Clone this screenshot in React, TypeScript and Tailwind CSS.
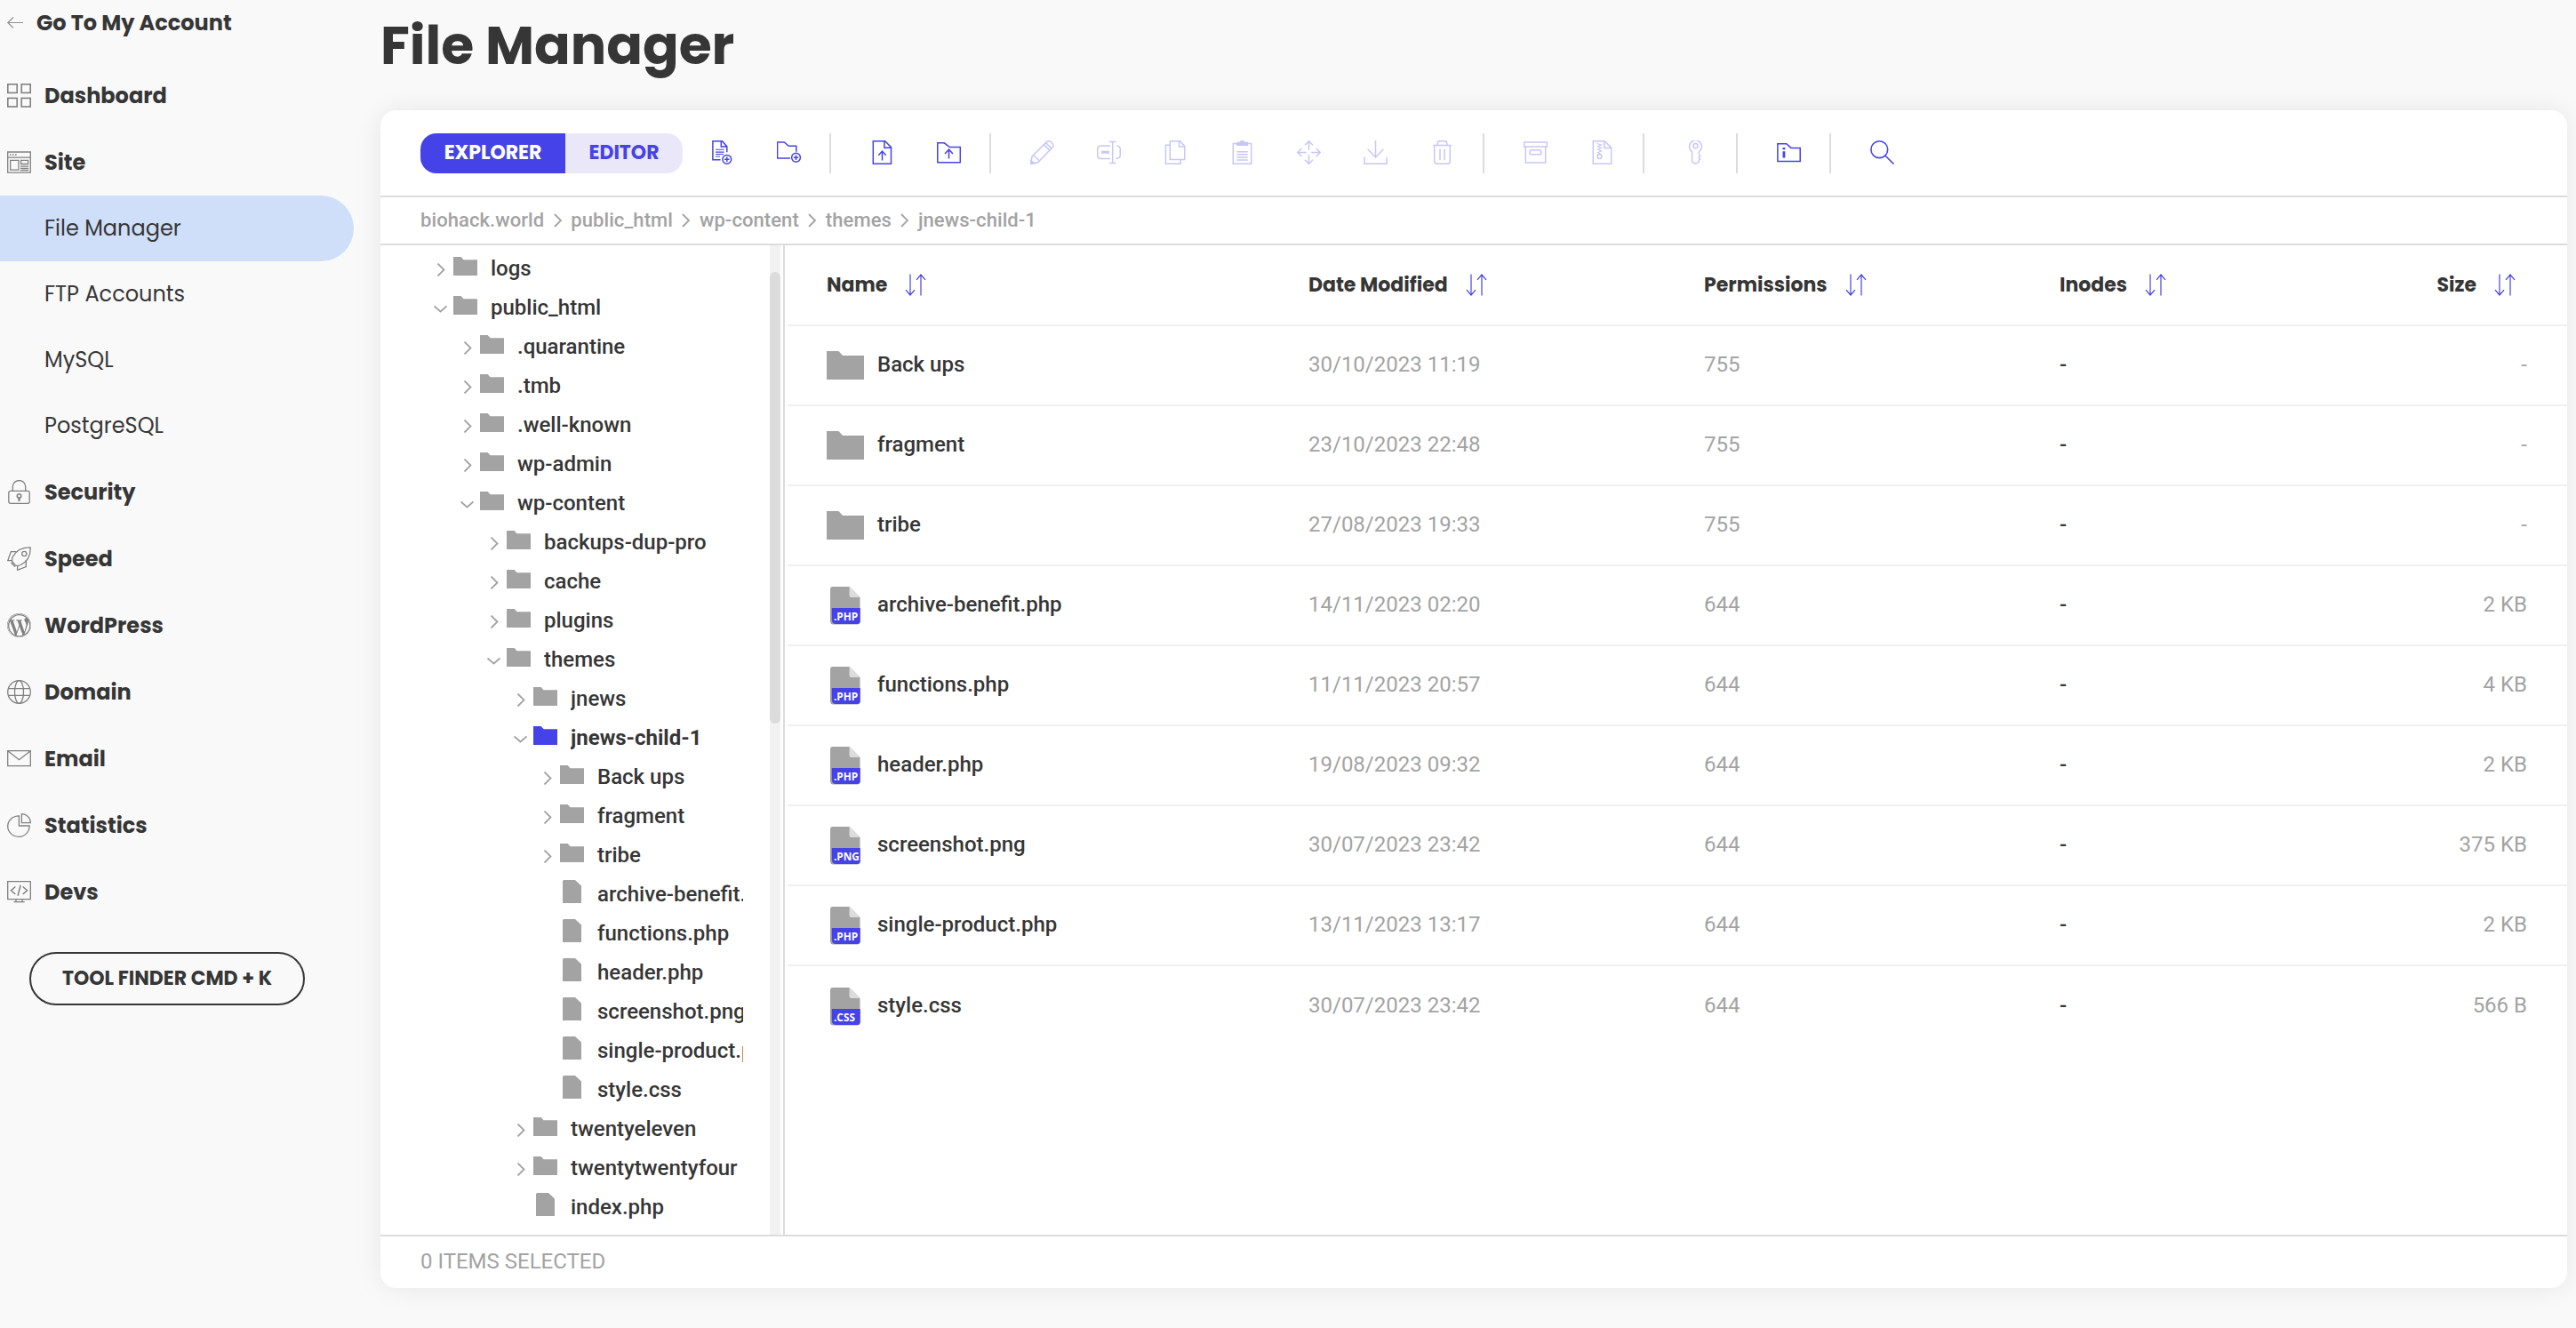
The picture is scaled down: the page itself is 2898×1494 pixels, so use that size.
import React from 'react';
import { clsx } from 'clsx';
import { FaWordpress } from 'react-icons/fa';

type Node = {
    name: string;
    depth: number;
    kind: 'closed' | 'open' | 'file';
    active?: boolean;
};

type FileRow = {
    name: string;
    date: string;
    permissions: string;
    size: string;
    ext?: string;
};

const tree: Node[] = [
    { name: 'logs', depth: 0, kind: 'closed' },
    { name: 'public_html', depth: 0, kind: 'open' },
    { name: '.quarantine', depth: 1, kind: 'closed' },
    { name: '.tmb', depth: 1, kind: 'closed' },
    { name: '.well-known', depth: 1, kind: 'closed' },
    { name: 'wp-admin', depth: 1, kind: 'closed' },
    { name: 'wp-content', depth: 1, kind: 'open' },
    { name: 'backups-dup-pro', depth: 2, kind: 'closed' },
    { name: 'cache', depth: 2, kind: 'closed' },
    { name: 'plugins', depth: 2, kind: 'closed' },
    { name: 'themes', depth: 2, kind: 'open' },
    { name: 'jnews', depth: 3, kind: 'closed' },
    { name: 'jnews-child-1', depth: 3, kind: 'open', active: true },
    { name: 'Back ups', depth: 4, kind: 'closed' },
    { name: 'fragment', depth: 4, kind: 'closed' },
    { name: 'tribe', depth: 4, kind: 'closed' },
    { name: 'archive-benefit.php', depth: 4, kind: 'file' },
    { name: 'functions.php', depth: 4, kind: 'file' },
    { name: 'header.php', depth: 4, kind: 'file' },
    { name: 'screenshot.png', depth: 4, kind: 'file' },
    { name: 'single-product.php', depth: 4, kind: 'file' },
    { name: 'style.css', depth: 4, kind: 'file' },
    { name: 'twentyeleven', depth: 3, kind: 'closed' },
    { name: 'twentytwentyfour', depth: 3, kind: 'closed' },
    { name: 'index.php', depth: 3, kind: 'file' },
];

const files: FileRow[] = [
    { name: 'Back ups', date: '30/10/2023 11:19', permissions: '755', size: '-' },
    { name: 'fragment', date: '23/10/2023 22:48', permissions: '755', size: '-' },
    { name: 'tribe', date: '27/08/2023 19:33', permissions: '755', size: '-' },
    { name: 'archive-benefit.php', date: '14/11/2023 02:20', permissions: '644', size: '2 KB', ext: '.PHP' },
    { name: 'functions.php', date: '11/11/2023 20:57', permissions: '644', size: '4 KB', ext: '.PHP' },
    { name: 'header.php', date: '19/08/2023 09:32', permissions: '644', size: '2 KB', ext: '.PHP' },
    { name: 'screenshot.png', date: '30/07/2023 23:42', permissions: '644', size: '375 KB', ext: '.PNG' },
    { name: 'single-product.php', date: '13/11/2023 13:17', permissions: '644', size: '2 KB', ext: '.PHP' },
    { name: 'style.css', date: '30/07/2023 23:42', permissions: '644', size: '566 B', ext: '.CSS' },
];

const crumbs = ['biohack.world', 'public_html', 'wp-content', 'themes', 'jnews-child-1'];

const columns = 'grid grid-cols-[542px_445px_400px_1fr_auto] pl-11 pr-[45px]';

/* ---------- icons ---------- */

const SideSvg = ({ children }: { children: React.ReactNode }) => (
    <svg width="27" height="27" viewBox="0 0 27 27" fill="none" stroke="#808080" strokeWidth="1.3">
        {children}
    </svg>
);

const sideIcons: Record<string, React.ReactNode> = {
    Dashboard: (
        <SideSvg>
            <g strokeWidth="1.6">
                <rect x=".8" y=".8" width="10.4" height="9.6" />
                <rect x="16.2" y=".8" width="10" height="9.6" />
                <rect x=".8" y="16.4" width="10.4" height="9.6" />
                <rect x="16.2" y="16.4" width="10" height="9.6" />
            </g>
        </SideSvg>
    ),
    Site: (
        <SideSvg>
            <path d="M.7 2h25.6v23.2H.7zM.7 8.2h25.6M3.7 11.3H13v10.9H3.7zM15.6 11.3h8v4.2h-8zM15 18.2h9.2M15 20.5h9.2M15 22.7h9.2" />
            <path d="M3 5h1.6M6 5h1.6M9 5h1.6" strokeWidth="1.5" />
        </SideSvg>
    ),
    Security: (
        <SideSvg>
            <rect x="1.8" y="12.3" width="23.4" height="14" rx="2" />
            <path d="M6.3 12.3V7.5a7.2 7 0 0 1 14.4 0v4.8" />
            <circle cx="13.5" cy="18" r="2.2" strokeWidth="1.6" />
            <path d="M13.5 20v3.8" strokeWidth="2.4" />
        </SideSvg>
    ),
    Speed: (
        <SideSvg>
            <path d="M26.2.8C17.5.5 10 4.2 6.3 11.5c-.9 2-1.100 4-.2 5.800L9.300 21c1.800.8 4 .3 5.900-.5C22.500 17 26.500 9.500 26.200.8z" />
            <circle cx="19.3" cy="8" r="2.6" />
            <path d="M10.5 5.700H4.300L.8 15.600h4.500M5.500 17.500l-.5 1.200 3.400 3.400 1.200-.5M21.300 15.200v7.300l-9.700 3.800v-4.500" />
        </SideSvg>
    ),
    // light mark on a grey disc, so the W itself comes out grey
    WordPress: (
        <span className="flex size-[27px] items-center justify-center overflow-hidden rounded-full bg-[#808080]">
            <FaWordpress className="size-[27.5px] shrink-0 text-[#f9f9f9]" />
        </span>
    ),
    Domain: (
        <SideSvg>
            <circle cx="13.5" cy="13.5" r="12.8" />
            <ellipse cx="13.5" cy="13.5" rx="5" ry="12.8" />
            <path d="M1.3 9.7h24.4M1.3 17.3h24.4" />
        </SideSvg>
    ),
    Email: (
        <SideSvg>
            <path d="M.7 4.7h25.6v17H.7zM.7 4.7l12.800 10 12.800-10" />
        </SideSvg>
    ),
    Statistics: (
        <SideSvg>
            <path d="M13.4 2.8C6.3 2.8.7 8 .7 14.600c0 6.500 5.600 11.700 12.300 11.700 6.800 0 12-5 12.200-12.300H13.400z" />
            <path d="M16.4.7v10h9.900c0-5.800-4.200-9.800-9.900-10z" />
        </SideSvg>
    ),
    Devs: (
        <SideSvg>
            <path d="M.7 1.6h25.6v20H.7zM10 21.6v2.600M17 21.6v2.600M7.5 24.6h12.200" />
            <path d="M9.3 7.5L4.5 11.800l4.800 4.200M17.7 7.5l4.800 4.300-4.800 4.200M15.2 5.800l-3.200 12" strokeWidth="1.5" />
        </SideSvg>
    ),
};

const toolIcons: Record<string, React.ReactNode> = {
    newFile: (
        <>
            <path d="M11.5 21.8H2.9V.7h10.600l5.300 6.200v6.300M12.300.9v6.200h6.500" />
            <path d="M6 10.2h9.600M6 13.100h9.600M6 15.500h9M6 18h5" strokeWidth="1.1" />
            <circle cx="18.8" cy="21.3" r="4.900" />
            <path d="M18.8 18.600V24M16.100 21.300h5.400" />
        </>
    ),
    newFolder: (
        <>
            <path d="M15 20H.6V2h7.700l5 4.300h8.500v6.500" />
            <circle cx="21.5" cy="19.2" r="4.900" />
            <path d="M21.500 16.500v5.400M18.800 19.200h5.400" />
        </>
    ),
    uploadFile: <path d="M3.3.7h13.300l6.900 6.900v18.700H3.300zM15.900.9v7.400h7.400M13.500 22.500v-10M9.300 16.700l4.200-4.600 4.200 4.600" />,
    uploadFolder: <path d="M.8 2.8h7.500l6 4.700h12v17.200H.8zM13.500 20.500v-9.800M9 15l4.500-4.800L18 15" />,
    edit: (
        <>
            <path d="M2 18L18.500 1.600c1.600-1.400 3.900-1 5.600.7 1.800 1.700 2.200 4.200.7 5.800L9 24.500l-8.200 1.800zM15.500 4.800l6.400 6.300M17.600 2.700l6.400 6.200M4 17l6.500 6" />
            <path d="M1 22.800l3.600 3-3.900.5z" fill="currentColor" />
        </>
    ),
    rename: (
        <>
            <path d="M15 6H5Q.7 6 .7 10v6.500q0 4 4.300 4h10M22.500 6q3.800.5 3.800 4v6.500q0 3.500-4.800 4M14 1.600h7.500M14 25.400h7.500M17.700 1.600v23.800" />
            <path d="M5 13.300h9" strokeWidth="3" />
        </>
    ),
    copy: <path d="M7.300.7h11.200l5.300 5.900v15H7.300zM17.500.9v6h6.200M7.300 5.300H2.400v21h16.900v-4.700" />,
    paste: (
        <>
            <path d="M3.300 3.600h20.400v22.700H3.300zM7.300 12.700h12.400M7.300 15.800h12.400M7.300 18.900h12.400M7.300 22h12.400" />
            <path d="M8 2.500h3q2.500-4 5 0h3.500v2.800h-12z" fill="currentColor" />
        </>
    ),
    move: <path d="M13.5 10.800V1M9 5.300L13.500.8 18 5.300M13.500 16.200V26M9 21.700l4.500 4.500 4.500-4.500M10.800 13.500H1M5.300 9L.8 13.500 5.300 18M16.200 13.500H26M21.700 9l4.500 4.500-4.500 4.500" />,
    download: <path d="M13.500.3v18.500M4.600 9.800l8.900 9.200 8.900-9.200M1 18.500v7.800h25v-7.800" />,
    trash: <path d="M3.200 5.400h20.600M8.200 5V3.500Q8.200.7 11 .7h5q2.800 0 2.800 2.800V5M4.700 5.400v17.900q0 3 3 3h11.600q3 0 3-3V5.400M11 9.500v12.800M16 9.500v12.800" />,
    archive: (
        <>
            <path d="M.7 2h25.600v5H.7zM2.300 7h22.400v18H2.300z" />
            <rect x="7" y="10.8" width="13" height="5" rx="2.4" />
        </>
    ),
    zip: (
        <>
            <path d="M3.300.7h13l7.400 7.700v17.900H3.300zM15.800.9v7.600h7.700" />
            <path d="M7.500 3.500l5 1.500-4 1.500 4 2-4 1.500 4 2-4 1.500 3 1.500" strokeWidth="1.1" />
            <circle cx="10.5" cy="18" r="2.4" />
        </>
    ),
    key: (
        <>
            <path d="M9.600 12.600A7 7 0 1 1 17.400 12.600v3.200l1.300 1.500-1.500 2 1.500 1.700-1.500 1.500v1.600l-3.700 2.200-3.900-2.500z" />
            <circle cx="13.500" cy="6.100" r="2.600" />
        </>
    ),
    info: (
        <>
            <path d="M.9 3.700h9.800l5.200 4.700h10.300v15H.9z" />
            <path d="M7.900 12.300v7.200M7.900 8v2.200" strokeWidth="2.800" />
        </>
    ),
    search: <path d="M10.300.8a9.400 9.400 0 1 0 0 18.800 9.400 9.400 0 1 0 0-18.800zM16.800 17l9.700 9.600" strokeWidth="1.6" />,
};

const FolderIcon = ({ className }: { className?: string }) => (
    <svg viewBox="0 0 42 32" preserveAspectRatio="none" fill="currentColor" className={className}>
        <path d="M0 0h13.500l4.500 5h24v27H0z" />
    </svg>
);

const FileIcon = () => (
    <svg width="21" height="26" viewBox="0 0 21 26" fill="currentColor" className="text-[#a3a3a3]">
        <path d="M1.500 0H14l7 6.500V26H0V1.500Q0 0 1.500 0z" />
    </svg>
);

const BadgeIcon = ({ ext }: { ext: string }) => (
    <svg width="34" height="43" viewBox="0 0 34 43">
        <path d="M3 0h18.500l12 12v27q0 3.500-3.500 3.500H3.500Q0 42.500 0 39V3q0-3 3-3z" fill="#a3a3a3" />
        <path d="M21.500 0l12 12H24q-2.500 0-2.500-2.500z" fill="#dcdcdc" />
        <path d="M1.800 24h32v14.500q0 3.500-3.500 3.500H7q-5.200 0-5.200-5z" fill="#4543e8" />
        <text x="4" y="37.5" fill="#fff" fontSize="11.8" fontWeight="700" fontFamily="Open Sans, sans-serif">{ext}</text>
    </svg>
);

const Chevron = ({ open }: { open: boolean }) => (
    <svg width="15" height="15" viewBox="0 0 15 15" fill="none" stroke="#a3a3a3" strokeWidth="1.8">
        {open ? <path d="M.5 4.5l7 6 7-6" /> : <path d="M4.500.5l7 7-7 7" />}
    </svg>
);

const SortIcon = () => (
    <svg width="24" height="25" viewBox="0 0 24 25" fill="none" stroke="#4543e8" strokeWidth="1.2">
        <path d="M6 .5v23.200M1 18.200L6 24l5-5.800M18 24.500V1.200M13 6.800L18 1l5 5.800" />
    </svg>
);

/* ---------- sidebar ---------- */

const NavItem = ({ name }: { name: string }) => (
    <a className="flex h-[75px] items-center gap-[15px] pl-2 font-bold">
        {sideIcons[name]}
        {name}
    </a>
);

const SubItem = ({ name, active }: { name: string; active?: boolean }) => (
    <a className={clsx('flex h-[74px] w-[398px] items-center rounded-r-[37px] pl-[50px]', active && 'bg-[#cfdff9]')}>
        {name}
    </a>
);

const Sidebar = () => (
    <aside className="flex w-[428px] shrink-0 flex-col font-['Poppins','Inter',sans-serif] text-2xl">
        <a className="flex h-[51px] items-center gap-[15px] pl-2 font-bold">
            <svg width="18" height="13" viewBox="0 0 18 13" fill="none" stroke="#909090" strokeWidth="1.2">
                <path d="M18 6.500H.8M7 .5l-6.200 6L7 12.500" />
            </svg>
            Go To My Account
        </a>
        <nav className="flex flex-col pt-[19px]">
            <NavItem name="Dashboard" />
            <NavItem name="Site" />
            <SubItem name="File Manager" active />
            <SubItem name="FTP Accounts" />
            <SubItem name="MySQL" />
            <SubItem name="PostgreSQL" />
            {['Security', 'Speed', 'WordPress', 'Domain', 'Email', 'Statistics', 'Devs'].map((name) => (
                <NavItem key={name} name={name} />
            ))}
        </nav>
        <button className="mt-[30px] ml-[33px] h-[60px] w-[310px] rounded-full border-2 border-[#363636] text-[22px] font-bold">
            TOOL FINDER CMD + K
        </button>
    </aside>
);

/* ---------- file manager ---------- */

const Tool = ({ name, disabled }: { name: string; disabled?: boolean }) => (
    <button className={clsx('flex h-[45px] w-[75px] items-center justify-center pb-0.5', disabled ? 'text-[#c7c6f8]' : 'text-[#4543e8]')}>
        <svg width="27" height="27" viewBox="0 0 27 27" fill="none" stroke="currentColor" strokeWidth="1.5">
            {toolIcons[name]}
        </svg>
    </button>
);

const Divider = () => <span className="mr-5 ml-2 h-[45px] w-0.5 bg-[#dcdcdc]" />;

const Toolbar = () => (
    <div className="flex h-[98px] shrink-0 items-center border-b-2 border-[#dcdcdc] pl-[45px]">
        <div className="mr-[7px] flex h-[45px] overflow-hidden rounded-[18px] font-['Poppins','Inter',sans-serif] text-[22px] leading-[43px] font-bold">
            <button className="w-[163px] bg-[#4543e8] pb-0.5 text-white">EXPLORER</button>
            <button className="w-[132px] bg-[#eae7f9] pb-0.5 text-[#4543e8]">EDITOR</button>
        </div>
        <Tool name="newFile" />
        <Tool name="newFolder" />
        <Divider />
        <Tool name="uploadFile" />
        <Tool name="uploadFolder" />
        <Divider />
        <Tool name="edit" disabled />
        <Tool name="rename" disabled />
        <Tool name="copy" disabled />
        <Tool name="paste" disabled />
        <Tool name="move" disabled />
        <Tool name="download" disabled />
        <Tool name="trash" disabled />
        <Divider />
        <Tool name="archive" disabled />
        <Tool name="zip" disabled />
        <Divider />
        <Tool name="key" disabled />
        <Divider />
        <Tool name="info" />
        <Divider />
        <Tool name="search" />
    </div>
);

const Breadcrumbs = () => (
    <div className="flex h-[54px] shrink-0 items-center border-b-2 border-[#dcdcdc] pl-[45px] text-[22px] font-medium tracking-[0.08px] text-[#a3a3a3]">
        {crumbs.map((crumb, i) => (
            <React.Fragment key={crumb}>
                {i > 0 && (
                    <svg width="11" height="16" viewBox="0 0 11 16" fill="none" stroke="currentColor" strokeWidth="1.8" className="mx-[9.5px]">
                        <path d="M2 1l7 7-7 7" />
                    </svg>
                )}
                <span className="pb-px">{crumb}</span>
            </React.Fragment>
        ))}
    </div>
);

const TreeRow = ({ node }: { node: Node }) => (
    <li className="flex h-11 items-center" style={{ paddingLeft: 60 + node.depth * 30 }}>
        <span className="flex w-[22px] shrink-0 pt-0.5">
            {node.kind !== 'file' && <Chevron open={node.kind === 'open'} />}
        </span>
        <span className="flex w-[27px] shrink-0 justify-center pb-1.5">
            {node.kind === 'file'
                ? <FileIcon />
                : <FolderIcon className={clsx('h-[21px] w-[27px]', node.active ? 'text-[#4543e8]' : 'text-[#a3a3a3]')} />}
        </span>
        <span className={clsx('ml-[15px] flex-1 overflow-hidden whitespace-nowrap', node.active ? 'font-bold' : 'font-medium')}>{node.name}</span>
    </li>
);

const Tree = () => (
    <div className="flex w-[455px] shrink-0 border-r-2 border-[#dcdcdc]">
        <ul className="mr-[30px] flex w-[408px] flex-col overflow-hidden pt-1">
            {tree.map((node, i) => <TreeRow key={i} node={node} />)}
        </ul>
        <div className="w-3 shrink-0 bg-[#f2f2f2] pt-[30px]">
            <div className="h-[508px] rounded-md bg-[#dcdcdc]" />
        </div>
    </div>
);

const HeadCell = ({ label }: { label: string }) => (
    <div className="flex items-center gap-5">
        {label}
        <SortIcon />
    </div>
);

const Table = () => (
    <div className="ml-[3px] flex-1">
        <div className={clsx(columns, "h-[91px] items-center border-b-2 border-[#f0f0f0] font-['Poppins','Inter',sans-serif] text-[22px] font-bold")}>
            <HeadCell label="Name" />
            <HeadCell label="Date Modified" />
            <HeadCell label="Permissions" />
            <HeadCell label="Inodes" />
            <div className="pr-[13px]"><HeadCell label="Size" /></div>
        </div>
        {files.map((file) => (
            <div key={file.name} className={clsx(columns, 'h-[90px] items-center border-b-2 border-[#f0f0f0] text-[#a3a3a3] last:border-b-0')}>
                <div className="flex items-center">
                    <span className="flex w-[42px] justify-center">
                        {file.ext ? <BadgeIcon ext={file.ext} /> : <FolderIcon className="h-8 w-[42px]" />}
                    </span>
                    <span className="ml-[15px] pb-[3px] font-medium text-[#363636]">{file.name}</span>
                </div>
                <span className="pb-[3px]">{file.date}</span>
                <span className="pb-[3px]">{file.permissions}</span>
                <span className="pb-[3px] font-medium text-[#363636]">-</span>
                <span className="pb-[3px]">{file.size}</span>
            </div>
        ))}
    </div>
);

export default function App() {
    return (
        <div className="flex h-[1494px] w-[2898px] overflow-hidden bg-[#f9f9f9] font-['Roboto',sans-serif] text-2xl text-[#363636]">
            <Sidebar />
            <main className="flex w-[2460px] flex-col">
                <h1 className="h-[124px] font-['Poppins','Inter',sans-serif] text-[60px] leading-[102px] font-bold">File Manager</h1>
                <section className="flex h-[1325px] flex-col overflow-hidden rounded-[18px] bg-white shadow-[0_0_30px_rgba(0,0,0,0.08)]">
                    <Toolbar />
                    <Breadcrumbs />
                    <div className="flex min-h-0 flex-1">
                        <Tree />
                        <Table />
                    </div>
                    <footer className="flex h-[60px] shrink-0 items-center border-t-2 border-[#dcdcdc] pb-[3px] pl-[45px] text-[#a3a3a3]">
                        0 ITEMS SELECTED
                    </footer>
                </section>
            </main>
        </div>
    );
}
